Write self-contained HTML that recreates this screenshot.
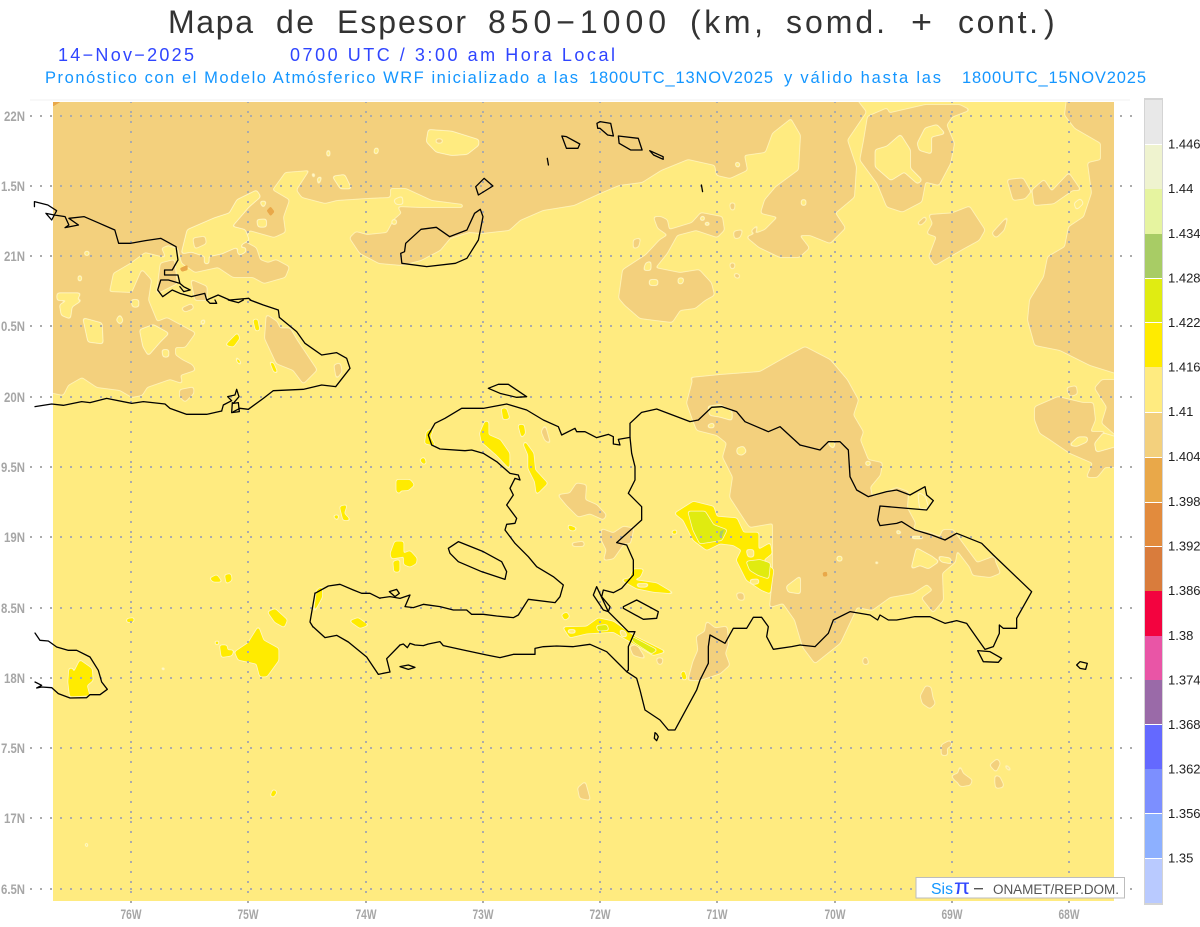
<!DOCTYPE html>
<html lang="es">
<head>
<meta charset="utf-8">
<title>Mapa de Espesor 850-1000</title>
<style>
html,body{margin:0;padding:0;background:#fff;}
svg{display:block;font-family:"Liberation Sans",sans-serif;}
.c polyline,.c polygon{fill:none;stroke:#000;stroke-width:1.3;stroke-linejoin:round;stroke-linecap:round;vector-effect:non-scaling-stroke;}
.grid line{stroke:#ABABAB;stroke-width:2;stroke-dasharray:2 8;}
.ax text{font-weight:bold;font-size:14px;fill:#A6A6A6;}
.cb text{font-size:13px;fill:#222;}
.ti text{font-size:32px;fill:#333;}
.l3 text{font-size:16.5px;fill:#1496FF;}
</style>
</head>
<body>
<svg width="1200" height="927" viewBox="0 0 1200 927" xmlns="http://www.w3.org/2000/svg">
<defs>
<filter id="ft" filterUnits="userSpaceOnUse" x="0" y="0" width="1200" height="927" color-interpolation-filters="sRGB">
<feGaussianBlur in="SourceAlpha" stdDeviation="1.3" result="b"/>
<feComponentTransfer in="b" result="m"><feFuncA type="linear" slope="6" intercept="-2.4"/></feComponentTransfer>
<feComponentTransfer in="b" result="r"><feFuncA type="linear" slope="6" intercept="-0.9"/></feComponentTransfer>
<feFlood flood-color="#FFF3B8"/><feComposite in2="r" operator="in" result="R"/>
<feFlood flood-color="#F3D07D"/><feComposite in2="m" operator="in" result="M"/>
<feMerge><feMergeNode in="R"/><feMergeNode in="M"/></feMerge>
</filter>
<filter id="fy" filterUnits="userSpaceOnUse" x="0" y="0" width="1200" height="927" color-interpolation-filters="sRGB">
<feGaussianBlur in="SourceAlpha" stdDeviation="1.3" result="b"/>
<feComponentTransfer in="b" result="m"><feFuncA type="linear" slope="6" intercept="-2.4"/></feComponentTransfer>
<feComponentTransfer in="b" result="r"><feFuncA type="linear" slope="6" intercept="-0.9"/></feComponentTransfer>
<feFlood flood-color="#FFF6C4"/><feComposite in2="r" operator="in" result="R"/>
<feFlood flood-color="#FFEB80"/><feComposite in2="m" operator="in" result="M"/>
<feMerge><feMergeNode in="R"/><feMergeNode in="M"/></feMerge>
</filter>
<filter id="fh" filterUnits="userSpaceOnUse" x="0" y="0" width="1200" height="927" color-interpolation-filters="sRGB">
<feGaussianBlur in="SourceAlpha" stdDeviation="1.1" result="b"/>
<feComponentTransfer in="b" result="m"><feFuncA type="linear" slope="6" intercept="-2.2"/></feComponentTransfer>
<feComponentTransfer in="b" result="r"><feFuncA type="linear" slope="6" intercept="-0.8"/></feComponentTransfer>
<feFlood flood-color="#FFF8C8"/><feComposite in2="r" operator="in" result="R"/>
<feFlood flood-color="#FFEB00"/><feComposite in2="m" operator="in" result="M"/>
<feMerge><feMergeNode in="R"/><feMergeNode in="M"/></feMerge>
</filter>
<filter id="fg" filterUnits="userSpaceOnUse" x="0" y="0" width="1200" height="927" color-interpolation-filters="sRGB">
<feGaussianBlur in="SourceAlpha" stdDeviation="1" result="b"/>
<feComponentTransfer in="b" result="m"><feFuncA type="linear" slope="6" intercept="-2.2"/></feComponentTransfer>
<feComponentTransfer in="b" result="r"><feFuncA type="linear" slope="6" intercept="-0.8"/></feComponentTransfer>
<feFlood flood-color="#FFF8C8"/><feComposite in2="r" operator="in" result="R"/>
<feFlood flood-color="#E0EB10"/><feComposite in2="m" operator="in" result="M"/>
<feMerge><feMergeNode in="R"/><feMergeNode in="M"/></feMerge>
</filter>
<filter id="fo" filterUnits="userSpaceOnUse" x="0" y="0" width="1200" height="927" color-interpolation-filters="sRGB">
<feGaussianBlur in="SourceAlpha" stdDeviation=".8" result="b"/>
<feComponentTransfer in="b" result="m"><feFuncA type="linear" slope="6" intercept="-2"/></feComponentTransfer>
<feFlood flood-color="#E9A849"/><feComposite in2="m" operator="in"/>
</filter>
</defs>
<rect width="1200" height="927" fill="#fff"/>

<!-- titles -->
<g class="ti">
<text x="168" y="33" textLength="85" lengthAdjust="spacing">Mapa</text>
<text x="276" y="33" textLength="38" lengthAdjust="spacing">de</text>
<text x="337" y="33" textLength="129" lengthAdjust="spacing">Espesor</text>
<text x="488" y="33" textLength="178" lengthAdjust="spacing">850−1000</text>
<text x="690" y="33" textLength="73" lengthAdjust="spacing">(km,</text>
<text x="786" y="33" textLength="99" lengthAdjust="spacing">somd.</text>
<text x="911" y="33" textLength="21" lengthAdjust="spacingAndGlyphs">+</text>
<text x="958" y="33" textLength="80" lengthAdjust="spacing">cont.</text>
<text x="1044" y="33">)</text>
</g>
<text x="58" y="61" font-size="18" fill="#2F45FF" textLength="136" lengthAdjust="spacing">14−Nov−2025</text>
<text x="290" y="61" font-size="18" fill="#2F45FF" textLength="325" lengthAdjust="spacing">0700 UTC / 3:00 am Hora Local</text>
<g class="l3">
<text x="45" y="83" textLength="533" lengthAdjust="spacing">Pronóstico con el Modelo Atmósferico WRF inicializado a las</text>
<text x="589" y="83" textLength="184" lengthAdjust="spacing">1800UTC_13NOV2025</text>
<text x="784" y="83" textLength="157" lengthAdjust="spacing">y válido hasta las</text>
<text x="962" y="83" textLength="184" lengthAdjust="spacing">1800UTC_15NOV2025</text>
</g>

<line x1="30" y1="100" x2="1130" y2="100" stroke="#f2f2f2"/>

<!-- map base -->
<rect x="53" y="102" width="1061" height="799" fill="#FFEB80"/>
<svg x="53" y="102" width="1061" height="799" viewBox="53 102 1061 799" overflow="hidden">

<!-- TAN LAYER 1 -->
<g filter="url(#ft)">
<polygon points="40,90 849,90 866,112 847,140 856,167 854,197 835,213 845,228 830,243 810,235 799,235 809,248 799,257 780,257 759,247 747,237 765,230 778,217 761,213 765,200 776,187 799,170 801,135 791,118 772,133 765,152 744,155 747,170 730,178 717,175 715,165 688,159 661,170 642,182 619,185 600,193 574,205 543,210 520,220 509,230 482,233 469,232 450,238 440,250 421,260 402,265 379,263 360,253 350,238 356,232 367,235 387,233 394,220 402,213 398,207 421,208 463,208 463,204 432,200 406,188 390,188 390,197 367,198 337,200 325,203 302,197 297,190 310,170 285,172 272,190 289,200 283,217 285,232 274,237 249,230 245,242 256,248 260,260 268,263 276,260 289,267 285,277 264,283 253,277 233,277 218,267 195,272 182,263 178,248 168,245 161,248 165,257 145,252 130,263 113,273 109,292 132,293 142,270 151,280 148,300 157,322 167,318 195,333 185,347 175,347 175,355 182,360 192,365 195,370 180,375 182,383 170,379 147,387 142,395 132,397 120,390 97,387 82,377 68,385 63,395 40,390"/>
<polygon points="1068,90 1125,90 1125,376 1090,365 1060,350 1035,345 1028,320 1030,300 1044,277 1048,257 1065,247 1069,227 1084,217 1092,193 1088,163 1101,160 1101,143 1075,128 1065,115"/>
<polygon points="1125,380 1102,380 1095,388 1107,407 1102,423 1125,443"/>
<polygon points="1035,407 1058,397 1083,403 1093,403 1095,420 1090,432 1105,432 1095,443 1095,452 1125,440 1125,467 1105,467 1097,477 1087,477 1093,463 1070,453 1048,438 1040,433 1035,420"/>
<polygon points="1067,388 1076,386 1077,394 1070,396"/>
<polygon points="654,217 661,217 667,220 669,230 692,223 701,213 722,217 724,230 717,237 696,230 677,235 667,253 655,268 680,273 699,270 711,283 714,295 705,300 695,308 680,310 672,322 655,320 640,318 625,305 619,298 623,270 646,255 660,240 668,235 658,228"/>
<polygon points="690,378 720,375 760,372 790,355 805,347 830,360 847,380 858,400 853,415 863,432 860,440 868,460 882,463 880,475 870,487 872,497 897,488 908,492 907,508 915,523 913,530 927,532 940,537 943,530 953,530 960,540 977,563 993,557 1000,573 990,577 973,575 970,567 957,550 955,562 942,573 943,600 933,612 922,598 933,590 927,584 913,593 890,597 872,610 857,607 840,643 815,663 803,647 800,637 795,620 783,603 770,607 772,587 773,573 773,523 750,527 747,523 730,497 733,477 723,457 727,443 717,435 697,430 693,420 687,403 693,380"/>
<polygon points="957,780 972,780 970,785 960,786"/>
<polygon points="995,780 1002,782 1003,787 996,788"/>
<polygon points="578,788 585,782 590,800 580,798"/>
<g transform="translate(600,0) scale(.38272,.33333)">
<polygon points="700,350 750,325 755,340 850,315 940,315 965,330 920,350 905,375 925,430 915,490 885,555 850,545 840,605 790,635 750,620 725,550 680,480 690,420"/>
<polygon points="1065,540 1105,535 1125,575 1110,595 1080,600"/>
<polygon points="1130,570 1160,540 1180,575 1225,520 1255,570 1235,570 1185,610 1135,615"/>
<polygon points="860,645 920,640 965,620 1005,690 990,720 950,745 875,795 860,770 880,710 855,700 870,670"/>
<polygon points="1025,700 1065,650 1055,690 1035,712"/>
<polygon points="830,670 850,650 852,660 838,675"/>
<polygon points="340,790 352,790 350,805 342,805"/>
<polygon points="352,820 365,825 362,835 352,830"/>
<polygon points="340,610 352,610 350,630 342,628"/>
<polygon points="350,695 372,690 365,712 352,715"/>
<polygon points="395,695 412,675 405,700"/>
<polygon points="88,720 105,715 100,740 88,745"/>
</g>
<g transform="translate(0,300) scale(.33333)">
<polygon points="800,45 830,65 840,85 870,85 890,120 950,210 910,250 880,210 830,190 795,115"/>
<polygon points="1003,195 1020,190 1025,215 1010,235"/>
<polygon points="540,270 580,262 580,280 555,305 540,290"/>
<polygon points="545,25 575,12 580,25 555,35"/>
</g>
<g transform="translate(400,380) scale(.33333)">
<polygon points="475,345 510,340 530,310 558,315 555,360 590,375 618,405 610,418 570,400 535,410 500,375"/>
<polygon points="605,447 640,460 670,440 700,445 695,470 690,490 672,490 640,535 612,540 620,510 605,480"/>
<polygon points="515,490 550,485 552,498 520,498"/>
<polygon points="425,155 435,137 450,190 435,180"/>
<polygon points="890,770 915,755 920,725 945,745 980,740 985,790 975,820 988,855 960,880 900,900 865,900 880,845 895,810"/>
<polygon points="1010,640 1030,640 1032,660 1015,658"/>
<polygon points="770,835 788,835 785,852 775,852"/>
<polygon points="690,800 710,795 735,835 700,825"/>
</g>
<g transform="translate(800,380) scale(.33333)">
<polygon points="805,25 825,20 830,35 815,45"/>
<polygon points="190,835 200,832 205,852 190,852"/>
<polygon points="575,530 585,535 585,545 575,545"/>
</g>
<g transform="translate(900,670) scale(.33333)">
<polygon points="78,48 92,52 98,85 105,100 90,115 68,100 62,78"/>
<polygon points="125,225 150,212 155,225 140,235 142,255 125,255"/>
<polygon points="180,288 188,310 215,330 200,335 190,350 165,330 155,318 175,310"/>
<polygon points="270,285 292,267 300,280 288,305"/>
<polygon points="285,318 298,320 310,345 290,352"/>
<polygon points="318,285 332,298 328,302 316,290"/>
</g>
</g>

<!-- YELLOW INCLUSIONS -->
<g filter="url(#fy)">
<g transform="translate(600,0) scale(.38272,.33333)">
<polygon points="720,450 750,440 785,405 810,450 810,505 840,540 830,550 795,515 760,540 720,500"/>
<polygon points="830,430 850,385 880,375 900,400 865,410 865,460 835,450"/>
<polygon points="1240,610 1255,597 1262,610 1245,628"/>
<polygon points="355,487 365,490 362,502 355,497"/>
<polygon points="527,600 537,600 537,615 527,615"/>
<polygon points="120,790 132,785 132,810 115,810"/>
<polygon points="130,840 150,840 150,855 130,855"/>
<polygon points="205,835 218,835 215,850 205,850"/>
<polygon points="265,650 272,650 272,660 262,660"/>
<polygon points="275,668 285,668 285,675 275,675"/>
</g>
<g transform="scale(.38272,.33333)">
<polygon points="1120,390 1180,395 1250,420 1250,435 1220,462 1180,465 1140,455 1115,425"/>
<polygon points="870,530 900,525 917,565 890,565"/>
<polygon points="475,760 490,690 560,655 600,640 620,600 670,572 680,590 650,620 605,680 640,690 650,720 620,740 580,760 540,770 500,755"/>
<polygon points="150,880 210,880 200,900 150,900"/>
<polygon points="980,445 988,445 986,460 978,460"/>
<polygon points="855,452 861,452 861,468 855,468"/>
<polygon points="672,660 695,658 695,680 675,680"/>
<polygon points="680,605 695,605 688,622"/>
<polygon points="618,735 630,735 630,745 618,745"/>
<polygon points="620,750 640,742 642,755 625,765"/>
<polygon points="535,770 545,770 545,790 535,790"/>
<polygon points="815,520 822,522 820,535"/>
<polygon points="830,535 840,530 832,555"/>
<polygon points="205,828 212,828 212,842 205,842"/>
<polygon points="222,755 232,755 232,765 222,765"/>
<polygon points="1030,600 1050,590 1052,612 1035,612"/>
<polygon points="1025,660 1035,660 1035,672 1025,672"/>
</g>
<g transform="translate(0,300) scale(.33333)">
<polygon points="420,90 460,75 505,100 480,125 445,165 430,140"/>
<polygon points="250,55 305,70 308,130 265,125"/>
<polygon points="180,15 205,0 245,0 215,20 210,55 185,45"/>
<polygon points="487,150 505,150 505,170 490,170"/>
<polygon points="350,60 360,45 368,62 360,72"/>
<polygon points="395,0 415,0 415,20 398,20"/>
<polygon points="602,65 615,58 610,75"/>
</g>
<g transform="translate(400,380) scale(.33333)">
<polygon points="925,80 960,75 995,95 995,120 960,110 930,105"/>
<polygon points="1012,205 1030,200 1038,215 1025,225 1012,220"/>
<polygon points="925,135 940,130 942,142 925,142"/>
<polygon points="1160,620 1200,590 1200,640 1165,635"/>
</g>
<g transform="translate(800,380) scale(.33333)">
<polygon points="85,190 105,182 100,205"/>
<polygon points="335,565 350,505 395,530 415,545 385,565 360,555"/>
<polygon points="415,530 450,535 455,550 425,545"/>
<polygon points="810,195 835,172 862,172 860,185 830,198"/>
<polygon points="885,190 910,160 960,175 960,195 890,215"/>
<polygon points="330,470 360,470 375,475 340,475"/>
<polygon points="355,338 375,350 385,385 360,385"/>
<polygon points="290,450 305,458 292,462"/>
<polygon points="198,245 210,245 210,255 198,255"/>
<polygon points="112,530 125,530 125,542 112,542"/>
<polygon points="225,545 238,548 228,552"/>
</g>
</g>

<!-- TAN LAYER 2 -->
<g filter="url(#ft)">
<g transform="scale(.38272,.33333)">
<polygon points="1140,418 1155,418 1155,428 1140,428"/>
<polygon points="505,715 535,710 538,730 510,745"/>
<polygon points="500,840 540,860 540,900 510,900"/>
<polygon points="420,790 455,780 462,850 410,880"/>
</g>
</g>

<!-- HOT YELLOW -->
<g filter="url(#fh)">
<polygon points="268,612 275,609 287,620 284,627 275,622"/>
<polygon points="314,612 317,590 322,587 322,597"/>
<polygon points="350,621 358,618 368,625 360,628"/>
<polygon points="127,619 134,618 133,622 127,622"/>
<g transform="translate(0,300) scale(.33333)">
<polygon points="760,60 772,58 778,90 768,92"/>
<polygon points="678,135 712,100 718,115 700,140"/>
<polygon points="708,170 720,185 722,195 712,185"/>
<polygon points="810,185 820,190 832,218 822,215"/>
<polygon points="630,835 650,825 665,845 640,845"/>
<polygon points="675,825 692,822 695,840 680,850"/>
<polygon points="1172,760 1185,725 1210,725 1210,770 1175,775"/>
<polygon points="1180,785 1198,780 1198,815 1183,815"/>
<polygon points="1020,620 1040,615 1032,640 1050,660 1030,660 1025,640"/>
<polygon points="1000,648 1015,645 1012,660"/>
<polygon points="1190,545 1200,545 1200,580 1190,575"/>
</g>
<g transform="translate(400,380) scale(.33333)">
<polygon points="75,190 80,155 100,145 90,170 105,197"/>
<polygon points="305,85 318,85 328,115 310,118"/>
<polygon points="240,160 255,125 265,125 265,165 300,180 328,220 328,265 290,225 245,185"/>
<polygon points="355,135 372,135 375,160 365,172"/>
<polygon points="375,185 400,220 405,270 442,310 410,342 405,305 385,265 385,225 372,195"/>
<polygon points="60,240 72,232 78,250 70,252"/>
<polygon points="-10,300 30,300 42,315 25,330 -10,332"/>
<polygon points="12,520 30,513 50,535 48,550 30,560 12,553"/>
<polygon points="505,435 530,445 520,452 507,448"/>
<polygon points="825,400 880,365 940,380 950,410 1010,415 1030,458 1075,458 1075,510 1110,490 1115,520 1090,540 1120,570 1110,640 1085,630 1040,600 1010,540 1025,510 1000,495 960,490 920,510 880,480 850,420"/>
<polygon points="665,600 690,595 700,568 730,568 720,590 700,600 770,610 820,640 760,635 710,625"/>
<polygon points="490,742 560,740 595,715 640,725 705,770 795,815 760,825 700,790 640,755 560,760 510,772"/>
<polygon points="485,705 500,697 508,710 495,720"/>
<polygon points="843,880 852,872 860,895 850,900"/>
<polygon points="815,455 828,450 830,460 820,462"/>
</g>
<g transform="translate(0,627) scale(.33333)">
<polygon points="208,125 218,125 220,140 240,100 275,125 278,160 260,175 268,205 210,208 205,165"/>
<polygon points="660,55 680,55 682,70 700,70 695,85 665,90"/>
<polygon points="705,75 745,48 775,0 790,40 835,65 835,100 800,148 780,148 770,110 715,98"/>
<polygon points="812,505 820,488 830,495 820,510"/>
<polygon points="645,45 655,42 655,52 648,52"/>
<polygon points="255,652 262,648 262,662"/>
<polygon points="483,123 493,123 492,130"/>
</g>
</g>

<!-- CHARTREUSE -->
<g filter="url(#fg)">
<g transform="translate(400,380) scale(.33333)">
<polygon points="865,395 915,395 940,435 980,450 965,480 900,490 880,450"/>
<polygon points="1040,545 1080,540 1110,550 1105,595 1075,585 1050,570"/>
<polygon points="590,738 620,735 625,750 595,752"/>
<polygon points="695,770 770,810 755,820 700,785"/>
</g>
</g>

<!-- LIGHT INCLUSIONS INSIDE HOT -->
<g filter="url(#fy)">
<g transform="translate(400,380) scale(.33333)">
<polygon points="1040,510 1060,510 1060,530 1045,530"/>
<polygon points="1050,600 1075,598 1075,610 1055,612"/>
<polygon points="505,750 525,750 525,758 505,758"/>
<polygon points="660,750 675,755 680,770 665,768"/>
<polygon points="710,612 745,612 740,620 715,620"/>
</g>
</g>
<polygon transform="translate(400,380) scale(.33333)" points="960,455 972,448 965,470 958,470" fill="#A8CC65"/>

<!-- ORANGE -->
<g filter="url(#fo)">
<g transform="scale(.38272,.33333)">
<polygon points="697,632 707,620 717,635 707,648"/>
<polygon points="470,805 490,795 490,810 475,815"/>
<polygon points="120,295 172,295 140,318 120,318"/>
</g>
<g transform="translate(800,380) scale(.33333)"><polygon points="68,578 80,575 82,588 70,590"/></g>
</g>

<!-- grid vertical -->
<g class="grid">
<line x1="131" y1="101" x2="131" y2="905"/><line x1="248" y1="101" x2="248" y2="905"/><line x1="366" y1="101" x2="366" y2="905"/><line x1="483" y1="101" x2="483" y2="905"/><line x1="600" y1="101" x2="600" y2="905"/><line x1="717" y1="101" x2="717" y2="905"/><line x1="835" y1="101" x2="835" y2="905"/><line x1="952" y1="101" x2="952" y2="905"/><line x1="1069" y1="101" x2="1069" y2="905"/>
</g>
</svg>

<!-- grid horizontal + ticks outside map -->
<g class="grid">
<line x1="30" y1="116" x2="1135" y2="116"/><line x1="30" y1="186" x2="1135" y2="186"/><line x1="30" y1="256" x2="1135" y2="256"/><line x1="30" y1="326" x2="1135" y2="326"/><line x1="30" y1="397" x2="1135" y2="397"/><line x1="30" y1="467" x2="1135" y2="467"/><line x1="30" y1="537" x2="1135" y2="537"/><line x1="30" y1="608" x2="1135" y2="608"/><line x1="30" y1="678" x2="1135" y2="678"/><line x1="30" y1="748" x2="1135" y2="748"/><line x1="30" y1="818" x2="1135" y2="818"/><line x1="30" y1="889" x2="1135" y2="889"/>
<line x1="131" y1="901" x2="131" y2="906"/><line x1="248" y1="901" x2="248" y2="906"/><line x1="366" y1="901" x2="366" y2="906"/><line x1="483" y1="901" x2="483" y2="906"/><line x1="600" y1="901" x2="600" y2="906"/><line x1="717" y1="901" x2="717" y2="906"/><line x1="835" y1="901" x2="835" y2="906"/><line x1="952" y1="901" x2="952" y2="906"/><line x1="1069" y1="901" x2="1069" y2="906"/>
</g>

<!-- coast -->
<g class="c">
<g transform="scale(.38272,.33333)">
<polyline points="90,620 90,605 125,615 148,632 142,645 120,640 135,660 142,645 170,650 180,675 170,683 205,675 180,655 220,650 260,670 300,690 310,730 340,730 380,722 420,715 460,740 465,780 450,810 430,810 430,825 465,825 470,850 440,840 420,840 412,870 425,890 450,870 470,880 500,890 535,880 540,900 570,885 600,900 650,895 655,900"/>
<polyline points="470,850 480,860 497,870 480,875 470,860"/>
<polygon points="1047,760 1050,790 1115,800 1190,790 1220,775 1250,720 1262,650 1255,628 1240,640 1220,690 1175,710 1140,682 1100,688 1060,730 1057,755"/>
<polygon points="1243,560 1265,535 1288,558 1250,585"/>
<polygon points="1468,408 1480,410 1515,432 1510,445 1480,445"/>
<polyline points="1430,475 1433,495"/>
</g>
<g transform="translate(600,0) scale(.38272,.33333)">
<polygon points="-8,370 0,365 28,370 35,408 20,405 0,385 -6,385"/>
<polygon points="48,408 100,415 110,450 80,450 50,430"/>
<polygon points="130,452 165,470 165,478 140,465"/>
<polyline points="265,555 268,575"/>
</g>
<g transform="translate(0,300) scale(.33333)">
<polyline points="750,0 790,15 835,30 838,52 890,95 915,130 965,165 1010,158 1040,175 1050,205 1007,260 965,255 910,268 820,272 790,295 745,328 720,325 700,335"/>
<polyline points="665,333 620,343 560,343 510,325 495,312 430,305 395,310 320,295 270,308 245,305 190,316 155,312 105,320"/>
<polyline points="665,333 670,315 695,302 683,290 705,285 710,268 717,290 700,310 715,308 718,335 695,338 697,308"/>
<polyline points="620,0 630,10 650,10 645,0"/>
<polyline points="685,0 715,8 730,0"/>
<polyline points="945,880 985,858 1020,853 1060,870 1085,880 1110,880 1140,895"/>
<polygon points="1168,875 1190,868 1198,880 1185,890"/>
</g>
<g transform="translate(400,380) scale(.33333)">
<polyline points="-60,654 -30,650 0,655 30,645 15,680 40,683 70,673 120,680 160,690 200,690 215,703 250,703 290,708 340,713 355,705 385,658 465,668 480,650 490,615 460,590 435,575 410,560 385,530 345,490 315,450 320,433 345,430 350,415 320,375 340,345 330,325 345,295 360,300 355,285 330,280 290,245 250,220 215,210 195,212 120,207 95,195 85,165 105,130 135,115 185,85 250,85 320,72 380,90 430,120 475,140 485,165 525,145 530,155 555,155 590,173 625,163 640,170 640,192 660,195 655,178 690,172 690,130 725,97 770,87 870,125 895,120 935,82 965,80 1010,95 1035,125 1105,155 1140,140 1200,195"/>
<polyline points="690,172 695,220 705,260 705,300 685,340 725,380 725,420 650,488 680,495 700,540 700,585 665,625 640,638 610,630 605,650 630,680 625,695 590,620 580,645 610,690 625,695 685,755 705,755 685,800 685,870 680,875"/>
<polygon points="670,680 710,660 775,695 770,715 730,718 670,685"/>
<polygon points="265,25 295,13 325,13 380,50 350,52 300,40"/>
<polygon points="145,505 175,485 250,515 305,545 320,575 315,598 245,575 175,545 150,520"/>
<polygon points="0,860 25,855 45,862 25,868"/>
<polyline points="1200,795 1175,800 1120,808 1100,770 1105,740 1085,712 1060,712 1040,745 1000,745 975,790 930,765 925,800 925,850 900,900 890,930 825,1050 805,1050 780,1020 735,990 720,930 710,895 680,875 660,855 620,815 570,793 520,800 470,798 430,800 405,805 405,823 340,823 300,833 260,825 190,810 130,797 120,785 85,792 70,797 45,795 30,790 22,803 10,792 0,795"/>
<polygon points="765,1058 770,1062 775,1070 770,1082 763,1075"/>
</g>
<g transform="translate(800,380) scale(.33333)">
<polyline points="0,195 60,210 85,185 120,185 145,210 150,290 170,330 205,350 260,335 290,330 330,345 375,320 380,345 400,362 380,390 240,378 233,420 240,437 290,430 305,425 345,450 395,465 435,480 470,460 545,490 580,525 695,635 650,715 650,745 610,745 598,735 598,760 580,800 555,808 535,780 500,730 470,722 435,730 390,710 345,710 290,720 265,720 240,705 233,720 210,705 150,695 100,720 85,760 45,800 0,795"/>
<polygon points="533,812 570,815 605,835 595,847 550,845"/>
<polygon points="830,855 840,845 862,850 857,868 840,865"/>
</g>
<g transform="translate(0,627) scale(.33333)">
<polyline points="1200,54 1160,95 1170,135 1135,142 1100,90 1045,45 1010,25 975,32 940,0"/>
<polyline points="105,18 120,40 145,42 170,60 205,70 230,70 270,90 295,130 305,165 322,187 300,203 270,203 260,212 210,213 175,200 155,182 125,180 110,183 125,175 105,165"/>
</g>
<polyline points="313,627 310,622 315,593"/>
</g>

<!-- axis labels -->
<g class="ax" text-anchor="end">
<text x="25" y="121" textLength="21" lengthAdjust="spacingAndGlyphs">22N</text>
<text x="25" y="191" textLength="24" lengthAdjust="spacingAndGlyphs">1.5N</text>
<text x="25" y="261" textLength="21" lengthAdjust="spacingAndGlyphs">21N</text>
<text x="25" y="331" textLength="24" lengthAdjust="spacingAndGlyphs">0.5N</text>
<text x="25" y="402" textLength="21" lengthAdjust="spacingAndGlyphs">20N</text>
<text x="25" y="472" textLength="24" lengthAdjust="spacingAndGlyphs">9.5N</text>
<text x="25" y="542" textLength="21" lengthAdjust="spacingAndGlyphs">19N</text>
<text x="25" y="613" textLength="24" lengthAdjust="spacingAndGlyphs">8.5N</text>
<text x="25" y="683" textLength="21" lengthAdjust="spacingAndGlyphs">18N</text>
<text x="25" y="753" textLength="24" lengthAdjust="spacingAndGlyphs">7.5N</text>
<text x="25" y="823" textLength="21" lengthAdjust="spacingAndGlyphs">17N</text>
<text x="25" y="894" textLength="24" lengthAdjust="spacingAndGlyphs">6.5N</text>
</g>
<g class="ax" text-anchor="middle">
<text x="131" y="919" textLength="21" lengthAdjust="spacingAndGlyphs">76W</text>
<text x="248" y="919" textLength="21" lengthAdjust="spacingAndGlyphs">75W</text>
<text x="366" y="919" textLength="21" lengthAdjust="spacingAndGlyphs">74W</text>
<text x="483" y="919" textLength="21" lengthAdjust="spacingAndGlyphs">73W</text>
<text x="600" y="919" textLength="21" lengthAdjust="spacingAndGlyphs">72W</text>
<text x="717" y="919" textLength="21" lengthAdjust="spacingAndGlyphs">71W</text>
<text x="835" y="919" textLength="21" lengthAdjust="spacingAndGlyphs">70W</text>
<text x="952" y="919" textLength="21" lengthAdjust="spacingAndGlyphs">69W</text>
<text x="1069" y="919" textLength="21" lengthAdjust="spacingAndGlyphs">68W</text>
</g>

<!-- colour bar -->
<rect x="1144" y="98" width="19" height="807" fill="#D4D4D4"/>
<rect x="1145" y="100" width="17" height="803" fill="#fff"/>
<rect x="1145" y="100" width="17" height="44" fill="#E8E8E8"/>
<rect x="1145" y="145" width="17" height="44" fill="#EFF3CF"/>
<rect x="1145" y="189" width="17" height="45" fill="#E6F4A0"/>
<rect x="1145" y="234" width="17" height="44" fill="#A8CC65"/>
<rect x="1145" y="279" width="17" height="43" fill="#E0EC12"/>
<rect x="1145" y="323" width="17" height="44" fill="#FFEB00"/>
<rect x="1145" y="367" width="17" height="45" fill="#FFEB80"/>
<rect x="1145" y="413" width="17" height="44" fill="#F3D07D"/>
<rect x="1145" y="458" width="17" height="44" fill="#E9A849"/>
<rect x="1145" y="503" width="17" height="43" fill="#E28B3D"/>
<rect x="1145" y="547" width="17" height="44" fill="#D97C3C"/>
<rect x="1145" y="591" width="17" height="45" fill="#F3033F"/>
<rect x="1145" y="636" width="17" height="44" fill="#E955A6"/>
<rect x="1145" y="680" width="17" height="44" fill="#9A6AA8"/>
<rect x="1145" y="725" width="17" height="44" fill="#6469FF"/>
<rect x="1145" y="769" width="17" height="44" fill="#7C8FFF"/>
<rect x="1145" y="814" width="17" height="44" fill="#8DB0FF"/>
<rect x="1145" y="859" width="17" height="44" fill="#B9CAFF"/>
<g class="cb">
<text x="1168" y="148.5">1.446</text>
<text x="1168" y="193">1.44</text>
<text x="1168" y="238">1.434</text>
<text x="1168" y="282.5">1.428</text>
<text x="1168" y="327">1.422</text>
<text x="1168" y="371.5">1.416</text>
<text x="1168" y="416">1.41</text>
<text x="1168" y="461">1.404</text>
<text x="1168" y="506">1.398</text>
<text x="1168" y="550.5">1.392</text>
<text x="1168" y="595">1.386</text>
<text x="1168" y="640">1.38</text>
<text x="1168" y="684.5">1.374</text>
<text x="1168" y="729">1.368</text>
<text x="1168" y="773.5">1.362</text>
<text x="1168" y="818">1.356</text>
<text x="1168" y="862.5">1.35</text>
</g>

<!-- logo box -->
<rect x="916" y="877.5" width="208.5" height="20.5" fill="#fff" stroke="#BDBDBD" stroke-width="1"/>
<text x="931" y="894" font-size="15.5" fill="#1496FF" textLength="22" lengthAdjust="spacingAndGlyphs">Sis</text>
<text x="954" y="894" font-size="21" fill="#2F45FF" textLength="16" lengthAdjust="spacingAndGlyphs">π</text>
<rect x="974" y="888" width="9" height="1.4" fill="#555"/>
<text x="993" y="894" font-size="13.5" fill="#555" textLength="126" lengthAdjust="spacing">ONAMET/REP.DOM.</text>
</svg>
</body>
</html>
